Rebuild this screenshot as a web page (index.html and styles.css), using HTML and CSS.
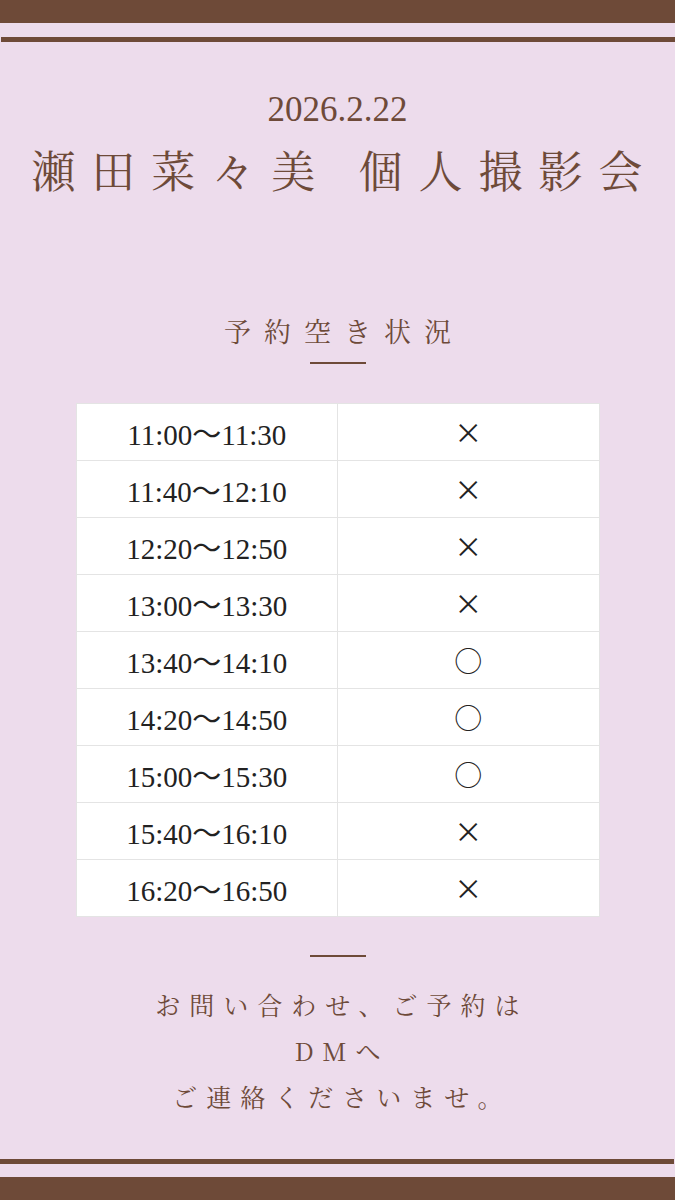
FILE: index.html
```html
<!DOCTYPE html>
<html lang="ja">
<head>
  <meta charset="UTF-8" />
  <title>瀬田菜々美 個人撮影会</title>
  <link rel="stylesheet" href="styles.css">
</head>
<body>
  <div class="page">
    <div class="bar-top"></div>
    <div class="line line-top"></div>

    <header class="head">
      <p class="date">2026.2.22</p>
      <h1 class="title">瀬田菜々美 個人撮影会</h1>
    </header>

    <section class="status">
      <h2 class="status-title">予約空き状況</h2>
      <div class="rule"></div>

      <table class="slots">
        <tr><td class="time">11:00～11:30</td><td class="mark">×</td></tr>
        <tr><td class="time">11:40～12:10</td><td class="mark">×</td></tr>
        <tr><td class="time">12:20～12:50</td><td class="mark">×</td></tr>
        <tr><td class="time">13:00～13:30</td><td class="mark">×</td></tr>
        <tr><td class="time">13:40～14:10</td><td class="mark">○</td></tr>
        <tr><td class="time">14:20～14:50</td><td class="mark">○</td></tr>
        <tr><td class="time">15:00～15:30</td><td class="mark">○</td></tr>
        <tr><td class="time">15:40～16:10</td><td class="mark">×</td></tr>
        <tr><td class="time">16:20～16:50</td><td class="mark">×</td></tr>
      </table>

      <div class="rule rule-bottom"></div>
    </section>

    <footer class="contact">
      <p>お問い合わせ、ご予約は</p>
      <p>DMへ</p>
      <p>ご連絡くださいませ。</p>
    </footer>

    <div class="line line-bottom"></div>
    <div class="bar-bottom"></div>
  </div>
</body>
</html>
```

FILE: styles.css
```css
body {
  margin: 0;
  background-color: #eddcec;
  color: #6e4a39;
  font-family: "Noto Serif CJK JP", "Liberation Serif", "Noto Sans CJK JP", serif;
}

.page {
  width: 675px;
  height: 1200px;
  display: flex;
  flex-direction: column;
  overflow: hidden;
}

.bar-top,
.bar-bottom {
  height: 23px;
  background-color: #6e4a38;
}

.line {
  height: 5px;
  background-color: #6e4a38;
}

.line-top {
  margin: 14px 0 0 1px;
}

.line-bottom {
  margin: auto 1px 13px 0;
}

.head {
  text-align: center;
  padding-top: 48px;
}

.date {
  margin: 0;
  font-family: "Liberation Serif", serif;
  font-size: 35px;
  line-height: 40px;
}

.title {
  margin: 13px 0 0 15px;
  font-family: "Noto Serif CJK JP", "Noto Sans CJK JP", serif;
  font-weight: 400;
  font-size: 44px;
  line-height: 52px;
  letter-spacing: 16px;
}

.status {
  display: flex;
  flex-direction: column;
  align-items: center;
  padding-top: 119px;
}

.status-title {
  margin: 0 0 0 13px;
  font-family: "Noto Serif CJK JP", "Noto Sans CJK JP", serif;
  font-weight: 400;
  font-size: 27px;
  line-height: 34px;
  letter-spacing: 13px;
}

.rule {
  width: 56px;
  height: 2px;
  margin-top: 14px;
  background-color: #6e4a38;
}

.slots {
  width: 524px;
  margin-top: 39px;
  border-collapse: collapse;
  background: #fff;
  color: #222;
}

.slots td {
  height: 56px;
  padding: 0;
  border: 1px solid #e4e4e4;
  text-align: center;
  width: 50%;
}

.time {
  font-family: "Liberation Serif", "Noto Sans CJK JP", serif;
  font-size: 29px;
}

.mark {
  font-family: "Noto Sans CJK JP", sans-serif;
  font-size: 28px;
  font-weight: 400;
}

.rule-bottom {
  margin-top: 38px;
}

.contact {
  margin-top: 24px;
  text-align: center;
  font-family: "Noto Serif CJK JP", "Noto Sans CJK JP", serif;
  font-size: 25px;
  line-height: 46px;
  letter-spacing: 9px;
}

.contact p {
  margin: 0 0 0 9px;
}
```
